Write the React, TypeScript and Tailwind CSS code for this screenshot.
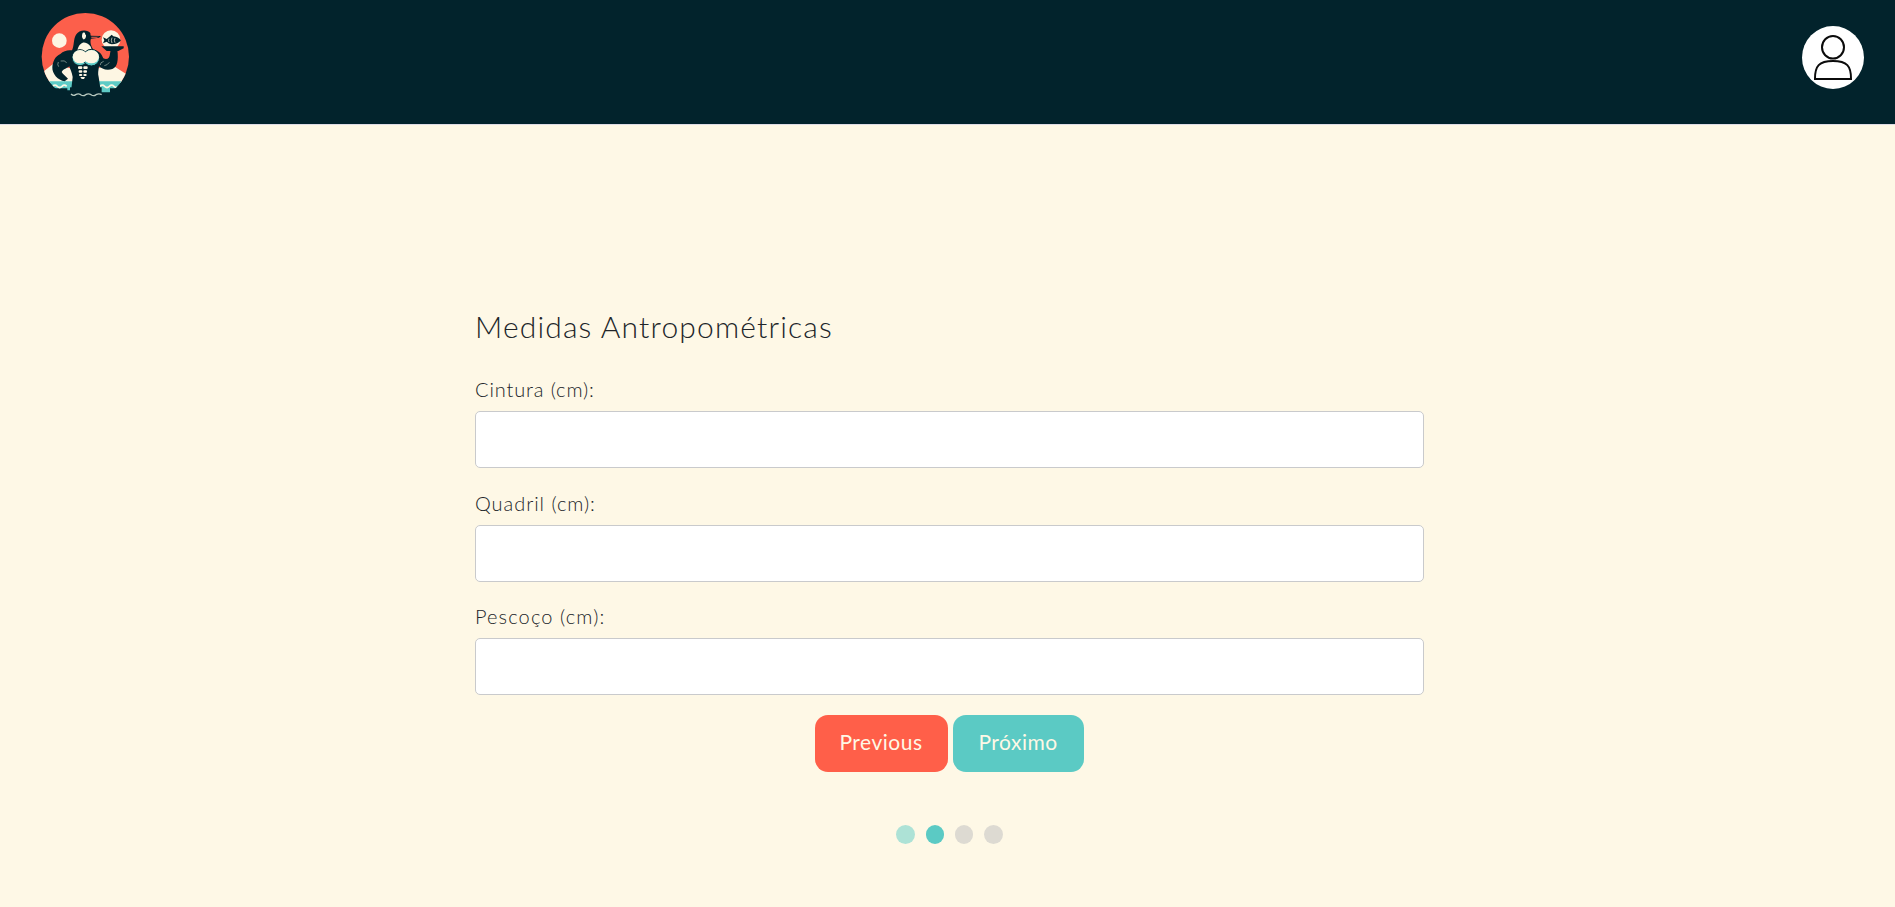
function Logo() {
  return (
    <svg viewBox="0 0 330 300" className="h-[100px] w-[110px]" aria-label="Logo">
      <defs>
        <clipPath id="disc">
          <circle cx="166" cy="155" r="131" />
        </clipPath>
      </defs>
      <g clipPath="url(#disc)">
        <rect x="30" y="20" width="270" height="212" fill="#fc5f4b" />
        <path d="M30 208 L70 176 L120 190 L205 190 L240 176 L300 214 V235 H30Z" fill="#fdf6e3" />
        <path d="M30 229 H300 V256 H262 V250 H240 V262 H190 V256 H112 V250 H70 V256 H30Z" fill="#5ecbc6" />
        <path
          d="M40 244 q7 -7 14 0 t14 0 t14 0 t14 0 t14 0 M210 244 q7 -7 14 0 t14 0 t14 0 t14 0 t14 0 t14 0"
          fill="none"
          stroke="#fdf6e3"
          strokeWidth="5"
        />
      </g>
      <circle cx="88" cy="107" r="22" fill="#fdf6e3" />
      <g fill="#02232c">
        <path d="M120 247 H215 V272 H120Z" />
        <path d="M126 136 C133 122 130 101 138 89 C147 74 172 71 183 86 L184 100 C179 108 182 122 190 134 C207 136 216 148 220 160 C231 166 239 160 240 146 L242 134 H262 C266 166 262 186 247 192 C230 198 214 191 207 184 C205 198 203 206 206 216 L214 270 H122 L128 216 C126 202 120 192 118 184 C108 192 99 192 95 201 C98 208 106 212 114 221 L104 229 C84 226 66 207 67 187 C68 170 76 153 91 147 C101 137 114 134 126 136Z" />
      </g>
      <path d="M181 85 C192 81 205 85 213 93 L182 92Z" fill="#fc5f4b" />
      <path d="M180 92 L213 93 L207 98 L182 101Z" fill="#02232c" />
      <path d="M184 95 L207 95 C200 99 190 99 184 98Z" fill="#fc5f4b" />
      <path d="M158 84 C164 80 169 86 168 94 C167 100 164 104 160 103 C155 98 155 91 158 84Z" fill="#fdf6e3" />
      <circle cx="168" cy="86" r="3" fill="#02232c" />
      <path d="M158 113 C170 110 186 122 185 138 L167 146 L142 138 C143 126 150 116 158 113Z" fill="#fdf6e3" />
      <g stroke="#02232c" strokeWidth="3">
        <circle cx="150" cy="158" r="24" fill="#5ecbc6" />
        <circle cx="184" cy="158" r="25" fill="#5ecbc6" />
      </g>
      <g fill="#fdf6e3">
        <ellipse cx="150" cy="155" rx="22" ry="20" />
        <ellipse cx="184" cy="155" rx="23" ry="20" />
        <rect x="144" y="184" width="13" height="8" rx="3" />
        <rect x="160" y="184" width="13" height="8" rx="3" />
        <rect x="146" y="196" width="11" height="7" rx="3" />
        <rect x="160" y="196" width="11" height="7" rx="3" />
        <rect x="147" y="207" width="10" height="6" rx="3" />
        <rect x="160" y="207" width="10" height="6" rx="3" />
        <path d="M151 216 H165 L162 222 H155Z" />
      </g>
      <path
        d="M92 168 q12 -3 18 5 M85 171 q-4 8 1 14 M221 169 q-11 3 -10 11 M238 172 q-6 9 -15 10"
        fill="none"
        stroke="#a9b8ae"
        strokeWidth="2"
      />
      <circle cx="243" cy="104" r="28" fill="#fdf6e3" />
      <path d="M214 124 H281 V130 L265 138 H230Z" fill="#02232c" />
      <path d="M219 97 L230 102 Q239 94 245 89 L250 94 Q265 96 273 106 Q264 118 245 118 Q236 116 230 110 L219 115 L223 106Z" fill="#02232c" />
      <path d="M237 101 q-3 5 0 10 M246 98 q-4 8 0 16 M255 99 q-4 7 0 14" fill="none" stroke="#fdf6e3" strokeWidth="2" />
      <path d="M123 267 q7 7 14 2 q8 -5 15 0 q8 6 15 0 q8 -5 16 0 q8 6 15 0 q9 -5 17 0" fill="none" stroke="#b8c8bf" strokeWidth="4" />
    </svg>
  );
}

function Avatar() {
  return (
    <svg viewBox="0 0 62 63" className="h-[63px] w-[62px]" aria-label="Perfil">
      <ellipse cx="31" cy="31.5" rx="31" ry="31.5" fill="#fff" />
      <g fill="none" stroke="#0b0b0b" strokeWidth="2">
        <ellipse cx="31" cy="21.2" rx="11" ry="11.3" />
        <path d="M13 53 C12.8 40 17 35 31 35 C45 35 49.2 40 49 53Z" />
      </g>
    </svg>
  );
}

const fields = [
  { id: "cintura", label: "Cintura (cm):", tracking: "tracking-[0.88px]" },
  { id: "quadril", label: "Quadril (cm):", tracking: "tracking-[0.96px]" },
  { id: "pescoco", label: "Pescoço (cm):", tracking: "tracking-[1.12px]" },
];

export default function App() {
  return (
    <div className="flex h-[907px] flex-col overflow-hidden bg-[#fef8e6] font-['Lato','Open_Sans',sans-serif] font-light text-[#212529]">
      <header className="flex h-[125px] shrink-0 items-start justify-between border-b border-[#dedce6] bg-[#02232c] pl-[30px] pr-[31px]">
        <div className="pt-[5px]">
          <Logo />
        </div>
        <div className="pt-[26px]">
          <Avatar />
        </div>
      </header>
      <main className="ml-[475px] w-[949px] pt-[181px]">
        <h1 className="h-[69px] whitespace-nowrap text-[30px] leading-[40px] tracking-[1.16px]">Medidas Antropométricas</h1>
        <form>
          {fields.map((field) => (
            <div key={field.id} className="h-[113.5px]">
              <label htmlFor={field.id} className={`block h-9 text-[20px] leading-[28px] ${field.tracking}`}>
                {field.label}
              </label>
              <input id={field.id} className="block h-[57px] w-full rounded-[5px] border border-[#c9cacc] bg-white px-3 outline-none" />
            </div>
          ))}
          <div className="-mt-px flex justify-center gap-[5px] pr-px text-[21px] leading-[30px] font-normal text-[#fef8e6]">
            <button type="button" className="h-[57px] w-[133px] rounded-[13px] bg-[#ff5f49] pb-[3px] tracking-[0.5px]">
              Previous
            </button>
            <button type="button" className="h-[57px] w-[131px] rounded-[13px] bg-[#5bcac4] pb-[3px] tracking-[0.5px]">
              Próximo
            </button>
          </div>
        </form>
        <div className="mt-[53px] flex justify-center gap-[11px]">
          <span className="h-[19px] w-[19px] rounded-full bg-[#ade2d6]" />
          <span className="h-[19px] w-[18px] rounded-full bg-[#5bcac4]" />
          <span className="h-[19px] w-[18px] rounded-full bg-[#dddad2]" />
          <span className="h-[19px] w-[19px] rounded-full bg-[#dddad2]" />
        </div>
      </main>
    </div>
  );
}
